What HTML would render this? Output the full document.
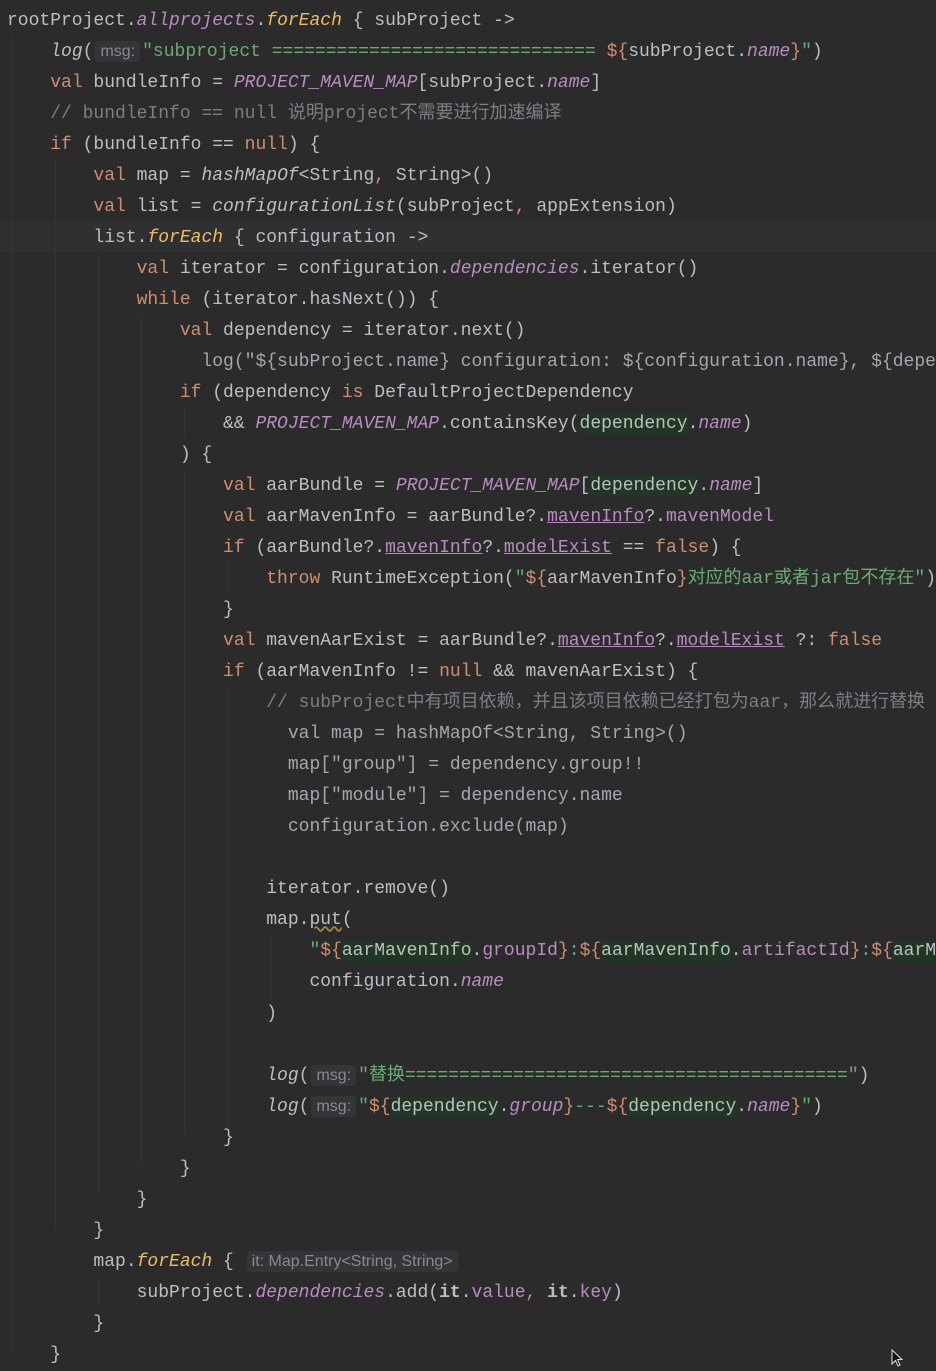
<!DOCTYPE html>
<html><head><meta charset="utf-8"><style>
html,body{margin:0;padding:0;background:#2b2b2c;width:936px;height:1367px;overflow:hidden}
.c{position:absolute;left:7px;top:6px;font-family:"Liberation Mono","Noto Sans CJK SC",monospace;font-size:18px;line-height:31.01px;color:#bcbec4;white-space:pre}
.k{color:#cf8e6d}.p{color:#b98cc0}.i{font-style:italic}.s{color:#6aab73}.cm{color:#7a7e85}.f{color:#f0bd5e;font-style:italic}
.g{background:#203823}.u{text-decoration:underline;text-decoration-color:#b98cc0}.d{color:#a4a7ad}
.h{font-family:"Liberation Sans",sans-serif;font-size:16px;line-height:16px;color:#868a91;background:#353537;border-radius:4px;padding:2px 5px;margin:0 2px}
.cur{position:absolute;left:0;top:221px;width:936px;height:31px;background:#2f3032}
.gl{position:absolute;width:1px;background:#333437}
</style></head><body>
<div class="cur"></div>
<div class="gl" style="left:12px;top:35px;height:1317px"></div>
<div class="gl" style="left:55px;top:159px;height:1070px"></div>
<div class="gl" style="left:98px;top:252px;height:945px"></div>
<div class="gl" style="left:141px;top:314px;height:852px"></div>
<div class="gl" style="left:184px;top:407px;height:30px"></div>
<div class="gl" style="left:184px;top:469px;height:666px"></div>
<div class="gl" style="left:227px;top:562px;height:30px"></div>
<div class="gl" style="left:227px;top:686px;height:440px"></div>
<div class="gl" style="left:270px;top:934px;height:70px"></div>
<div class="gl" style="left:98px;top:1275px;height:30px"></div>
<div class="c">rootProject.<span class="p i">allprojects</span>.<span class="f">forEach</span> { subProject -&gt;
    <span class="i">log</span>(<span class="h">msg:</span><span class="s">"subproject ============================== </span><span class="k">${</span>subProject.<span class="p i">name</span><span class="k">}</span><span class="s">"</span>)
    <span class="k">val</span> bundleInfo = <span class="p i">PROJECT_MAVEN_MAP</span>[subProject.<span class="p i">name</span>]
    <span class="cm">// bundleInfo == null 说明project不需要进行加速编译</span>
    <span class="k">if</span> (bundleInfo == <span class="k">null</span>) {
        <span class="k">val</span> map = <span class="i">hashMapOf</span>&lt;String<span class="k">,</span> String&gt;()
        <span class="k">val</span> list = <span class="i">configurationList</span>(subProject<span class="k">,</span> appExtension)
        list.<span class="f">forEach</span> { configuration -&gt;
            <span class="k">val</span> iterator = configuration.<span class="p i">dependencies</span>.iterator()
            <span class="k">while</span> (iterator.hasNext()) {
                <span class="k">val</span> dependency = iterator.next()
<span class="d">                  log("${subProject.name} configuration: ${configuration.name}, ${depe</span>
                <span class="k">if</span> (dependency <span class="k">is</span> DefaultProjectDependency
                    &amp;&amp; <span class="p i">PROJECT_MAVEN_MAP</span>.containsKey(<span class="g">dependency</span>.<span class="p i">name</span>)
                ) {
                    <span class="k">val</span> aarBundle = <span class="p i">PROJECT_MAVEN_MAP</span>[<span class="g">dependency</span>.<span class="p i">name</span>]
                    <span class="k">val</span> aarMavenInfo = aarBundle?.<span class="p u">mavenInfo</span>?.<span class="p">mavenModel</span>
                    <span class="k">if</span> (aarBundle?.<span class="p u">mavenInfo</span>?.<span class="p u">modelExist</span> == <span class="k">false</span>) {
                        <span class="k">throw</span> RuntimeException(<span class="s">"</span><span class="k">${</span>aarMavenInfo<span class="k">}</span><span class="s">对应的aar或者jar包不存在"</span>)
                    }
                    <span class="k">val</span> mavenAarExist = aarBundle?.<span class="p u">mavenInfo</span>?.<span class="p u">modelExist</span> ?: <span class="k">false</span>
                    <span class="k">if</span> (aarMavenInfo != <span class="k">null</span> &amp;&amp; mavenAarExist) {
                        <span class="cm">// subProject中有项目依赖，并且该项目依赖已经打包为aar，那么就进行替换</span>
<span class="d">                          val map = hashMapOf&lt;String, String&gt;()
                          map["group"] = dependency.group!!
                          map["module"] = dependency.name
                          configuration.exclude(map)</span>

                        iterator.remove()
                        map.<span style="text-decoration:underline wavy #a08a40">put</span>(
                            <span class="s">"</span><span class="k">${</span><span class="g">aarMavenInfo</span>.<span class="p">groupId</span><span class="k">}</span><span class="s">:</span><span class="k">${</span><span class="g">aarMavenInfo</span>.<span class="p">artifactId</span><span class="k">}</span><span class="s">:</span><span class="k">${</span><span class="g">aarM</span>
                            configuration.<span class="p i">name</span>
                        )

                        <span class="i">log</span>(<span class="h">msg:</span><span class="s">"替换=========================================</span><span class="s">"</span>)
                        <span class="i">log</span>(<span class="h">msg:</span><span class="s">"</span><span class="k">${</span><span class="g">dependency</span>.<span class="p i">group</span><span class="k">}</span><span class="s">---</span><span class="k">${</span><span class="g">dependency</span>.<span class="p i">name</span><span class="k">}</span><span class="s">"</span>)
                    }
                }
            }
        }
        map.<span class="f">forEach</span> { <span class="h">it: Map.Entry&lt;String, String&gt;</span>
            subProject.<span class="p i">dependencies</span>.add(<b>it</b>.<span class="p">value</span><span class="k">,</span> <b>it</b>.<span class="p">key</span>)
        }
    }</div>
<svg style="position:absolute;left:891px;top:1349px" width="12" height="18" viewBox="0 0 12 18"><path d="M1 1 L1 15 L4.5 11.5 L7 17 L9 16 L6.5 10.5 L11 10.5 Z" fill="#111" stroke="#ddd" stroke-width="1"/></svg>
</body></html>
